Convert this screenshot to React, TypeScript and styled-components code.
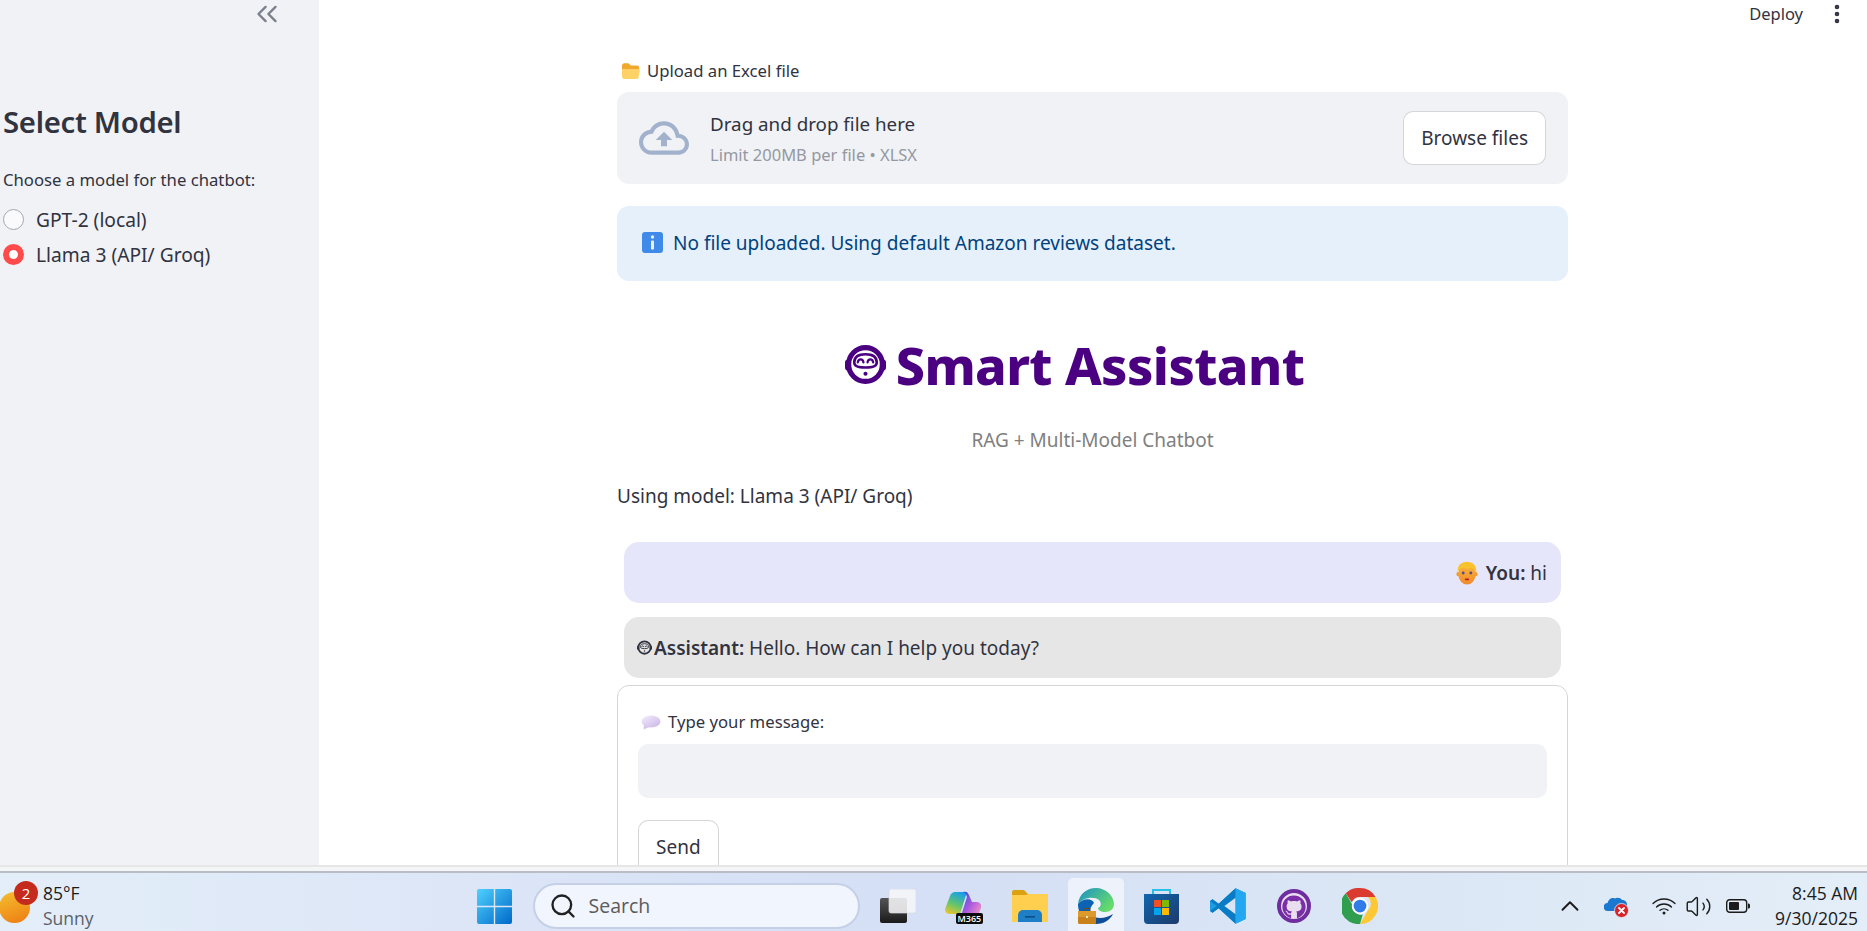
import React from 'react'
import styled, { createGlobalStyle } from 'styled-components'
import { ChevronsLeft, ChevronUp, EllipsisVertical, Search, Volume2 } from 'lucide-react'
import { FaGithub } from 'react-icons/fa'

const UI_FONT = '"Noto Sans", "Open Sans", sans-serif'
const TASKBAR_FONT = '"Open Sans", "Noto Sans", sans-serif'

const GlobalStyle = createGlobalStyle`
  html, body { margin: 0; padding: 0; height: 100%; overflow: hidden; background: #fff; }
  #root { height: 100%; }
  * { box-sizing: border-box; }
`

const Screen = styled.div`
  height: 100vh;
  display: flex;
  flex-direction: column;
  font-family: ${UI_FONT};
  color: #31333f;
`
const Page = styled.div`
  flex: 1;
  min-height: 0;
  display: flex;
  overflow: hidden;
  border-bottom: 2px solid #e6e6e6;
`
const Sidebar = styled.aside`
  width: 319px;
  flex-shrink: 0;
  background: #f0f2f6;
  padding: 0 3px;
  display: flex;
  flex-direction: column;
`
const CollapseRow = styled.div`
  height: 28px;
  display: flex;
  justify-content: flex-end;
  align-items: center;
  padding-right: 32px;
  color: #7c818c;
`
const SidebarTitle = styled.h2`
  margin: 76px 0 0;
  font-size: 29.3px;
  line-height: 36px;
  font-weight: 600;
  letter-spacing: -0.3px;
`
const FieldLabel = styled.div`
  margin-top: 28px;
  font-size: 16.7px;
  line-height: 24px;
`
const RadioRow = styled.label`
  display: flex;
  align-items: center;
  gap: 12px;
  height: 35px;
  font-size: 19.2px;
  &:first-of-type { margin-top: 10px; }
`
const RadioDot = styled.span<{ $on?: boolean }>`
  width: 21px;
  height: 21px;
  border-radius: 50%;
  flex-shrink: 0;
  background: ${(p) => (p.$on ? '#fff' : '#fafafc')};
  border: ${(p) => (p.$on ? '6px solid #ff4b4b' : '1px solid #a5a7ae')};
`
const Main = styled.main`
  flex: 1;
  min-width: 0;
  display: flex;
  flex-direction: column;
  overflow: hidden;
`
const Header = styled.header`
  height: 59px;
  flex-shrink: 0;
  display: flex;
  justify-content: flex-end;
  align-items: flex-start;
  padding: 2px 18px 0 0;
  gap: 22px;
  font-size: 16.5px;
  line-height: 24px;
`
const MenuDots = styled.span`
  display: flex;
  color: #31333f;
`
const Content = styled.div`
  width: 951px;
  margin-left: 298px;
  flex-shrink: 0;
`
const UploadLabel = styled.div`
  display: flex;
  align-items: center;
  gap: 6px;
  height: 23px;
  padding-left: 4px;
  font-size: 16.7px;
`
const DropZone = styled.section`
  margin-top: 10px;
  height: 92px;
  border-radius: 12px;
  background: #f0f2f6;
  display: flex;
  align-items: center;
  padding: 0 22px;
`
const DropText = styled.div`
  margin-left: 21px;
  flex: 1;
`
const DropTitle = styled.div`
  font-size: 18.8px;
  line-height: 34px;
`
const DropHint = styled.div`
  font-size: 16.5px;
  line-height: 28px;
  color: #9598a0;
`
const Button = styled.button`
  font-family: inherit;
  font-size: 19px;
  color: #31333f;
  background: #fff;
  border: 1px solid rgba(49, 51, 63, 0.2);
  border-radius: 10px;
  padding: 0 17px;
  height: 54px;
`
const InfoBox = styled.div`
  margin-top: 22px;
  height: 75px;
  border-radius: 12px;
  background: #e6f0fa;
  color: #004280;
  display: flex;
  align-items: center;
  gap: 10px;
  padding: 0 0 2px 25px;
  font-size: 19px;
`
const Title = styled.h1`
  margin: 43px 0 0;
  height: 80px;
  display: flex;
  justify-content: center;
  align-items: center;
  gap: 10px;
  padding-right: 36px;
  color: #4b0082;
  font-size: 52px;
  font-weight: 800;
  letter-spacing: -0.6px;
`
const Subtitle = styled.p`
  margin: 22px 0 0;
  text-align: center;
  color: #808080;
  font-size: 19px;
  line-height: 28px;
`
const ModelLine = styled.p`
  margin: 30px 0 0;
  font-size: 19px;
  line-height: 24px;
`
const Bubble = styled.div<{ $user?: boolean }>`
  margin: ${(p) => (p.$user ? '34px' : '14px')} 7px 0;
  height: 61px;
  border-radius: 15px;
  display: flex;
  align-items: center;
  gap: ${(p) => (p.$user ? '8px' : '2px')};
  padding: 0 14px 0 13px;
  font-size: 19px;
  justify-content: ${(p) => (p.$user ? 'flex-end' : 'flex-start')};
  background: ${(p) => (p.$user ? '#e6e6fa' : '#e6e6e6')};
  b { font-weight: 600; }
`
const FormCard = styled.form`
  margin-top: 7px;
  border: 1px solid #d6d6d9;
  border-radius: 12px;
  padding: 24px 20px 30px;
`
const FormLabel = styled.div`
  display: flex;
  align-items: center;
  gap: 7px;
  padding-left: 3px;
  font-size: 16.7px;
  line-height: 24px;
`
const TextInput = styled.input`
  display: block;
  width: 100%;
  height: 54px;
  margin: 10px 0 22px;
  border: none;
  border-radius: 10px;
  background: #f0f2f6;
`
const Chrome = styled.div`
  height: 4px;
  flex-shrink: 0;
  background: #f4f5f7;
`
const Taskbar = styled.footer`
  height: 60px;
  flex-shrink: 0;
  border-top: 2px solid #b9bdc5;
  background: linear-gradient(90deg, #e3eef9 0%, #dce6f7 25%, #d5dff5 50%, #dae5f5 70%, #e3eef8 100%);
  display: grid;
  grid-template-columns: 1fr auto 1fr;
  align-items: center;
  font-family: ${TASKBAR_FONT};
  color: #1b1b1b;
  overflow: hidden;
`
const Weather = styled.div`
  display: flex;
  align-items: center;
  gap: 13px;
  margin: 8px 0 0 -1px;
`
const WeatherIcon = styled.div`
  position: relative;
  width: 31px;
  height: 31px;
  border-radius: 50%;
  margin-top: 2px;
  background: linear-gradient(160deg, #f4c02e, #ee7a12);
`
const Badge = styled.span`
  position: absolute;
  top: -11px;
  left: 15px;
  width: 24px;
  height: 24px;
  border-radius: 50%;
  background: #c42b1c;
  color: #fff;
  font-size: 15px;
  line-height: 24px;
  text-align: center;
`
const WeatherText = styled.div`
  font-size: 17.5px;
  line-height: 25px;
`
const Muted = styled.div`
  color: #5c6068;
`
const AppDock = styled.div`
  display: flex;
  align-items: center;
  height: 100%;
  padding-right: 13px;
`
const DockSlot = styled.div<{ $active?: boolean }>`
  position: relative;
  width: ${(p) => (p.$active ? '56px' : '66px')};
  margin: 5px ${(p) => (p.$active ? '5px' : '0')} 0;
  height: 53px;
  padding-top: 3px;
  display: flex;
  align-items: center;
  justify-content: center;
  border-radius: 5px 5px 0 0;
  background: ${(p) => (p.$active ? 'rgba(255,255,255,0.55)' : 'transparent')};
`
const SearchPill = styled.div`
  width: 327px;
  height: 46px;
  margin: 7px 5px 0 5px;
  border-radius: 23px;
  background: #f1f5fe;
  border: 2px solid #c5d0e8;
  display: flex;
  align-items: center;
  gap: 12px;
  padding-left: 14px;
  font-size: 19.5px;
  color: #5b5b5b;
`
const M365Tag = styled.span`
  position: absolute;
  left: 25px;
  bottom: 7px;
  background: #0c0c0c;
  color: #fff;
  font-size: 9px;
  line-height: 11px;
  padding: 0 2px;
  border-radius: 2px;
  font-weight: 600;
`
const Tray = styled.div`
  display: flex;
  justify-content: flex-end;
  align-items: center;
  padding-right: 9px;
  margin-top: 8px;
`
const TrayIcon = styled.span<{ $gap?: number }>`
  display: flex;
  align-items: center;
  margin-left: ${(p) => p.$gap ?? 12}px;
`
const Clock = styled.div`
  margin-left: 25px;
  text-align: right;
  font-size: 17.5px;
  line-height: 25px;
`
const GithubBadge = styled.span`
  width: 34px;
  height: 34px;
  border-radius: 50%;
  background: #e9ddf0;
  border: 4px solid #6f2da0;
  color: #7b2fa6;
  display: flex;
  align-items: flex-end;
  justify-content: center;
  overflow: hidden;
`

const RobotIcon = ({ size }: { size: number }) => (
  <svg width={size} height={size} viewBox="0 0 40 40" fill="none">
    <rect x="0" y="15" width="6" height="11" rx="3" fill="currentColor" />
    <rect x="34" y="15" width="6" height="11" rx="3" fill="currentColor" />
    <circle cx="20" cy="20" r="16.5" stroke="currentColor" strokeWidth="5" />
    <path d="M9 18c0-6 5-8 11-8s11 2 11 8c0 4-5 5-11 5s-11-1-11-5z" stroke="currentColor" strokeWidth="2.5" />
    <path d="M12.5 18c.5-4 5-4 5.500 0M22 18c.5-4 5-4 5.500 0" stroke="currentColor" strokeWidth="2.2" strokeLinecap="round" />
    <circle cx="20" cy="29" r="2" fill="currentColor" />
  </svg>
)

const FolderEmoji = () => (
  <svg width="20" height="18" viewBox="0 0 20 18">
    <path d="M1 3.500C1 2.200 2 1.200 3.300 1.200h3.600c.8 0 1.300.4 1.800 1l1 1.300H16c1.300 0 2.200 1 2.200 2.200V8H1z" fill="#f0a92c" />
    <path d="M1.500 7h15.900c1 0 1.600.8 1.400 1.800l-1.300 6.700c-.2 1-1 1.500-1.900 1.500H3.200C2 17 1 16 1 14.800V7.500z" fill="#ffd268" />
  </svg>
)

const InfoEmoji = () => (
  <svg width="21" height="21" viewBox="0 0 21 21">
    <rect width="21" height="21" rx="3" fill="#3f8ae8" />
    <circle cx="10.500" cy="5" r="1.700" fill="#e8f2ff" />
    <rect x="9" y="8.500" width="3" height="9" rx="0.8" fill="#e8f2ff" />
  </svg>
)

const SpeechEmoji = () => (
  <svg width="20" height="15" viewBox="0 0 20 15">
    <defs>
      <linearGradient id="speech" x1="0" x2="1" y1="0" y2="1">
        <stop offset="0" stopColor="#f4eefc" />
        <stop offset="1" stopColor="#c9b4e6" />
      </linearGradient>
    </defs>
    <ellipse cx="10" cy="6.500" rx="9.500" ry="6" fill="url(#speech)" />
    <path d="M3 10l-.5 4.500 6-2.500z" fill="#d6c6ec" />
  </svg>
)

const FaceEmoji = () => (
  <svg width="22" height="24" viewBox="0 0 20 22">
    <defs>
      <linearGradient id="skin" x1="0" x2="0" y1="0" y2="1">
        <stop offset="0" stopColor="#fbb83c" />
        <stop offset="1" stopColor="#f08a2a" />
      </linearGradient>
    </defs>
    <circle cx="2.200" cy="12" r="2" fill="#ee9a30" />
    <circle cx="17.800" cy="12" r="2" fill="#ee9a30" />
    <ellipse cx="10" cy="12" rx="8" ry="9.500" fill="url(#skin)" />
    <path d="M1.500 10C1 4 5 .8 10 .8S19 4 18.500 10c-1.500-2-3-3.500-4.500-3.500-2 .8-6 .8-8 0C4.500 6.500 3 8 1.500 10z" fill="#f8c22e" />
    <circle cx="6.500" cy="11" r="1.300" fill="#5a4a8a" />
    <circle cx="13.500" cy="11" r="1.300" fill="#5a4a8a" />
    <rect x="8" y="16" width="4" height="1.600" rx="0.8" fill="#b02020" />
  </svg>
)

const WindowsLogo = () => (
  <svg width="35" height="35" viewBox="0 0 35 35">
    <defs>
      <linearGradient id="win" x1="0" x2="1" y1="0" y2="1">
        <stop offset="0" stopColor="#4fd0fd" />
        <stop offset="1" stopColor="#0069c9" />
      </linearGradient>
    </defs>
    <path d="M0 2a2 2 0 0 1 2-2h14.800v16.800H0zM18.200 0H33a2 2 0 0 1 2 2v14.800H18.200zM0 18.200h16.800V35H2a2 2 0 0 1-2-2zM18.200 18.200H35V33a2 2 0 0 1-2 2H18.200z" fill="url(#win)" />
  </svg>
)

const TaskViewIcon = () => (
  <svg width="36" height="34" viewBox="0 0 36 34">
    <defs>
      <linearGradient id="tv" x1="0" x2="0" y1="0" y2="1">
        <stop offset="0" stopColor="#555" />
        <stop offset="1" stopColor="#1a1a1a" />
      </linearGradient>
    </defs>
    <rect x="0" y="9" width="27" height="25" rx="2" fill="url(#tv)" />
    <rect x="9" y="0" width="27" height="24" rx="2" fill="#f6f6f8" fillOpacity="0.88" stroke="#d8dae0" strokeWidth="0.7" />
  </svg>
)

const CopilotIcon = () => (
  <svg width="37" height="30" viewBox="0 0 37 30">
    <defs>
      <linearGradient id="cpA" x1="0.6" x2="0.2" y1="0" y2="1">
        <stop offset="0" stopColor="#19a0e8" />
        <stop offset="0.55" stopColor="#64c56a" />
        <stop offset="1" stopColor="#e8c62e" />
      </linearGradient>
      <linearGradient id="cpB" x1="0" x2="1" y1="0" y2="0.8">
        <stop offset="0" stopColor="#1f4fd0" />
        <stop offset="0.55" stopColor="#b05ae0" />
        <stop offset="1" stopColor="#f29ac0" />
      </linearGradient>
    </defs>
    <path d="M10 1h12l-7 22H4c-3 0-4.500-3-3.500-6L5 5c1-2.500 3-4 5-4z" fill="url(#cpA)" />
    <path d="M18 1c3-1 5 0 6 3l3 7h5c3 0 5 3 4 6l-3 8c-1 2-3 3-5 3H15l7-22c-1-3-2-4-4-5z" fill="url(#cpB)" />
  </svg>
)

const FolderAppIcon = () => (
  <svg width="36" height="32" viewBox="0 0 36 32">
    <path d="M0 2a2 2 0 0 1 2-2h10l4 4h20v6H0z" fill="#dca111" />
    <path d="M0 5h14l2-1h20v28H0z" fill="#ffcf4f" />
    <path d="M6 32v-7a5 5 0 0 1 5-5h14a5 5 0 0 1 5 5v7z" fill="#1e7ec6" />
    <rect x="13" y="26" width="10" height="1.600" fill="#0c4f88" />
  </svg>
)

const EdgeIcon = () => (
  <svg width="36" height="36" viewBox="0 0 36 36">
    <defs>
      <linearGradient id="edgeA" x1="0" x2="1" y1="0" y2="0.600">
        <stop offset="0" stopColor="#1a8fc8" />
        <stop offset="1" stopColor="#66dc6a" />
      </linearGradient>
    </defs>
    <path d="M0 16C1 6 9 0 18 0c10 0 18 8 18 16 0 5-4 8-9 8-4 0-7-2-7-4 3-1 4-5 1-8-5-4-15-3-21 4z" fill="url(#edgeA)" />
    <path d="M0 16c5-6 14-6 16-1-3 3-6 8-3 15 1 2 3 4 5 6C8 36 0 27 0 16z" fill="#0c63b4" />
    <path d="M18 36c-3-1-6-5-6-9 4 3 14 5 23-1-3 6-9 10-17 10z" fill="#0f4d96" />
    <rect x="0" y="23" width="18" height="13" rx="1.500" fill="#c9821b" />
    <rect x="0" y="23" width="18" height="6" fill="#dd9a2c" />
    <path d="M6 23v-2.500h6V23" stroke="#6b4a1b" strokeWidth="1" fill="none" />
    <rect x="8" y="28" width="2" height="2" fill="#ffe9a8" />
  </svg>
)

const StoreIcon = () => (
  <svg width="35" height="36" viewBox="0 0 35 36">
    <defs>
      <linearGradient id="bag" x1="0" x2="1" y1="0" y2="1">
        <stop offset="0" stopColor="#0f66b0" />
        <stop offset="1" stopColor="#1d3a6a" />
      </linearGradient>
    </defs>
    <path d="M9 7V2h17v5" fill="none" stroke="#27c0e8" strokeWidth="2" />
    <path d="M0 6h35v26a4 4 0 0 1-4 4H4a4 4 0 0 1-4-4z" fill="url(#bag)" />
    <rect x="10" y="12" width="7" height="7" fill="#f25022" />
    <rect x="18" y="12" width="7" height="7" fill="#7fba00" />
    <rect x="10" y="20" width="7" height="7" fill="#00a4ef" />
    <rect x="18" y="20" width="7" height="7" fill="#ffb900" />
  </svg>
)

const VsCodeIcon = () => (
  <svg width="36" height="36" viewBox="0 0 100 100">
    <path d="M71 99l28-13V14L71 1 24 44 7 31l-7 5v28l7 5 17-13z" fill="#1b9de2" />
    <path d="M71 1L24 44 7 31l-7 5 19 14-19 14 7 5 17-13 47 43z" fill="#0a7cc6" />
    <path d="M71 27v46L40 50z" fill="#dbe4f5" />
    <path d="M71 1l28 13v72L71 99z" fill="#22a7f0" />
  </svg>
)

const ChromeIcon = () => (
  <svg width="36" height="36" viewBox="0 0 48 48">
    <path d="M24 0a24 24 0 0 1 20.800 12H24a12 12 0 0 0-11 7L5 7A24 24 0 0 1 24 0z" fill="#db3a2f" />
    <path d="M44.800 12A24 24 0 0 1 24 48l10.500-18a12 12 0 0 0 0-18z" fill="#fcc934" />
    <path d="M24 48A24 24 0 0 1 5 7l8.600 15a12 12 0 0 0 14 13.500z" fill="#2f9e4f" />
    <circle cx="24" cy="24" r="11" fill="#fff" />
    <circle cx="24" cy="24" r="8.500" fill="#2f7be8" />
  </svg>
)

const OneDriveError = () => (
  <svg width="25" height="24" viewBox="0 0 25 24">
    <path d="M4 17a4 4 0 0 1-.5-8C4.500 5 8 3 11 4.500c2-1.500 5.500-1 7 1.500 3 0 5 2 5 4.500 0 3-2 6.500-5 6.500z" fill="#1a78d0" />
    <circle cx="17.500" cy="16.500" r="7" fill="#d8232a" stroke="#e3eef8" strokeWidth="0.8" />
    <path d="M15 14l5 5m0-5l-5 5" stroke="#fff" strokeWidth="1.800" strokeLinecap="round" />
  </svg>
)

const WifiIcon = () => (
  <svg width="24" height="18" viewBox="0 0 24 18" fill="none" stroke="#1b1b1b" strokeWidth="1.300" strokeLinecap="round">
    <path d="M1 6.500c6-6 16-6 22 0M4.500 10c4-4 11-4 15 0M8 13.300c2.300-2 5.700-2 8 0" />
    <circle cx="12" cy="16" r="1.500" fill="#1b1b1b" stroke="none" />
  </svg>
)

const BatteryIcon = () => (
  <svg width="24" height="14" viewBox="0 0 24 14">
    <rect x="0.700" y="0.700" width="20" height="12.600" rx="3" fill="none" stroke="#1b1b1b" strokeWidth="1.400" />
    <rect x="3" y="3" width="10" height="8" rx="1" fill="#1b1b1b" />
    <path d="M22 4.500h.5a1.500 1.500 0 0 1 1.500 1.500v2a1.500 1.500 0 0 1-1.500 1.500H22z" fill="#1b1b1b" />
  </svg>
)

export default function App() {
  return (
    <Screen>
      <GlobalStyle />
      <Page>
        <Sidebar>
          <CollapseRow>
            <ChevronsLeft size={34} strokeWidth={1.7} />
          </CollapseRow>
          <SidebarTitle>Select Model</SidebarTitle>
          <FieldLabel>Choose a model for the chatbot:</FieldLabel>
          <RadioRow><RadioDot />GPT-2 (local)</RadioRow>
          <RadioRow><RadioDot $on />Llama 3 (API/ Groq)</RadioRow>
        </Sidebar>
        <Main>
          <Header>
            <span>Deploy</span>
            <MenuDots><EllipsisVertical size={24} strokeWidth={2.6} /></MenuDots>
          </Header>
          <Content>
            <UploadLabel><FolderEmoji />Upload an Excel file</UploadLabel>
            <DropZone>
              <svg width="50" height="50" viewBox="0 0 24 24" fill="#a3b2cc">
                <path d="M19.350 10.040C18.670 6.590 15.640 4 12 4 9.110 4 6.600 5.640 5.350 8.040 2.340 8.360 0 10.910 0 14c0 3.310 2.690 6 6 6h13c2.760 0 5-2.240 5-5 0-2.640-2.050-4.780-4.650-4.960zM19 18H6c-2.210 0-4-1.790-4-4 0-2.050 1.530-3.760 3.560-3.970l1.070-.11.5-.95C8.080 7.140 9.940 6 12 6c2.620 0 4.880 1.860 5.390 4.430l.3 1.500 1.530.11c1.560.1 2.780 1.410 2.780 2.960 0 1.650-1.350 3-3 3zM8 13h2.550v3h2.900v-3H16l-4-4z" />
              </svg>
              <DropText>
                <DropTitle>Drag and drop file here</DropTitle>
                <DropHint>Limit 200MB per file • XLSX</DropHint>
              </DropText>
              <Button type="button">Browse files</Button>
            </DropZone>
            <InfoBox><InfoEmoji />No file uploaded. Using default Amazon reviews dataset.</InfoBox>
            <Title><RobotIcon size={41} />Smart Assistant</Title>
            <Subtitle>RAG + Multi-Model Chatbot</Subtitle>
            <ModelLine>Using model: Llama 3 (API/ Groq)</ModelLine>
            <Bubble $user><FaceEmoji /><span><b>You:</b> hi</span></Bubble>
            <Bubble><RobotIcon size={15} /><span><b>Assistant:</b> Hello. How can I help you today?</span></Bubble>
            <FormCard>
              <FormLabel><SpeechEmoji />Type your message:</FormLabel>
              <TextInput />
              <Button type="button">Send</Button>
            </FormCard>
          </Content>
        </Main>
      </Page>
      <Chrome />
      <Taskbar>
        <Weather>
          <WeatherIcon><Badge>2</Badge></WeatherIcon>
          <WeatherText>
            85°F
            <Muted>Sunny</Muted>
          </WeatherText>
        </Weather>
        <AppDock>
          <DockSlot><WindowsLogo /></DockSlot>
          <SearchPill><Search size={28} color="#222" strokeWidth={2} />Search</SearchPill>
          <DockSlot><TaskViewIcon /></DockSlot>
          <DockSlot><CopilotIcon /><M365Tag>M365</M365Tag></DockSlot>
          <DockSlot><FolderAppIcon /></DockSlot>
          <DockSlot $active><EdgeIcon /></DockSlot>
          <DockSlot><StoreIcon /></DockSlot>
          <DockSlot><VsCodeIcon /></DockSlot>
          <DockSlot><GithubBadge><FaGithub size={24} /></GithubBadge></DockSlot>
          <DockSlot><ChromeIcon /></DockSlot>
        </AppDock>
        <Tray>
          <TrayIcon><ChevronUp size={30} strokeWidth={1.5} /></TrayIcon>
          <TrayIcon $gap={19}><OneDriveError /></TrayIcon>
          <TrayIcon $gap={23}><WifiIcon /></TrayIcon>
          <TrayIcon $gap={9}><Volume2 size={27} strokeWidth={1.25} /></TrayIcon>
          <TrayIcon $gap={14}><BatteryIcon /></TrayIcon>
          <Clock>8:45 AM<br />9/30/2025</Clock>
        </Tray>
      </Taskbar>
    </Screen>
  )
}
